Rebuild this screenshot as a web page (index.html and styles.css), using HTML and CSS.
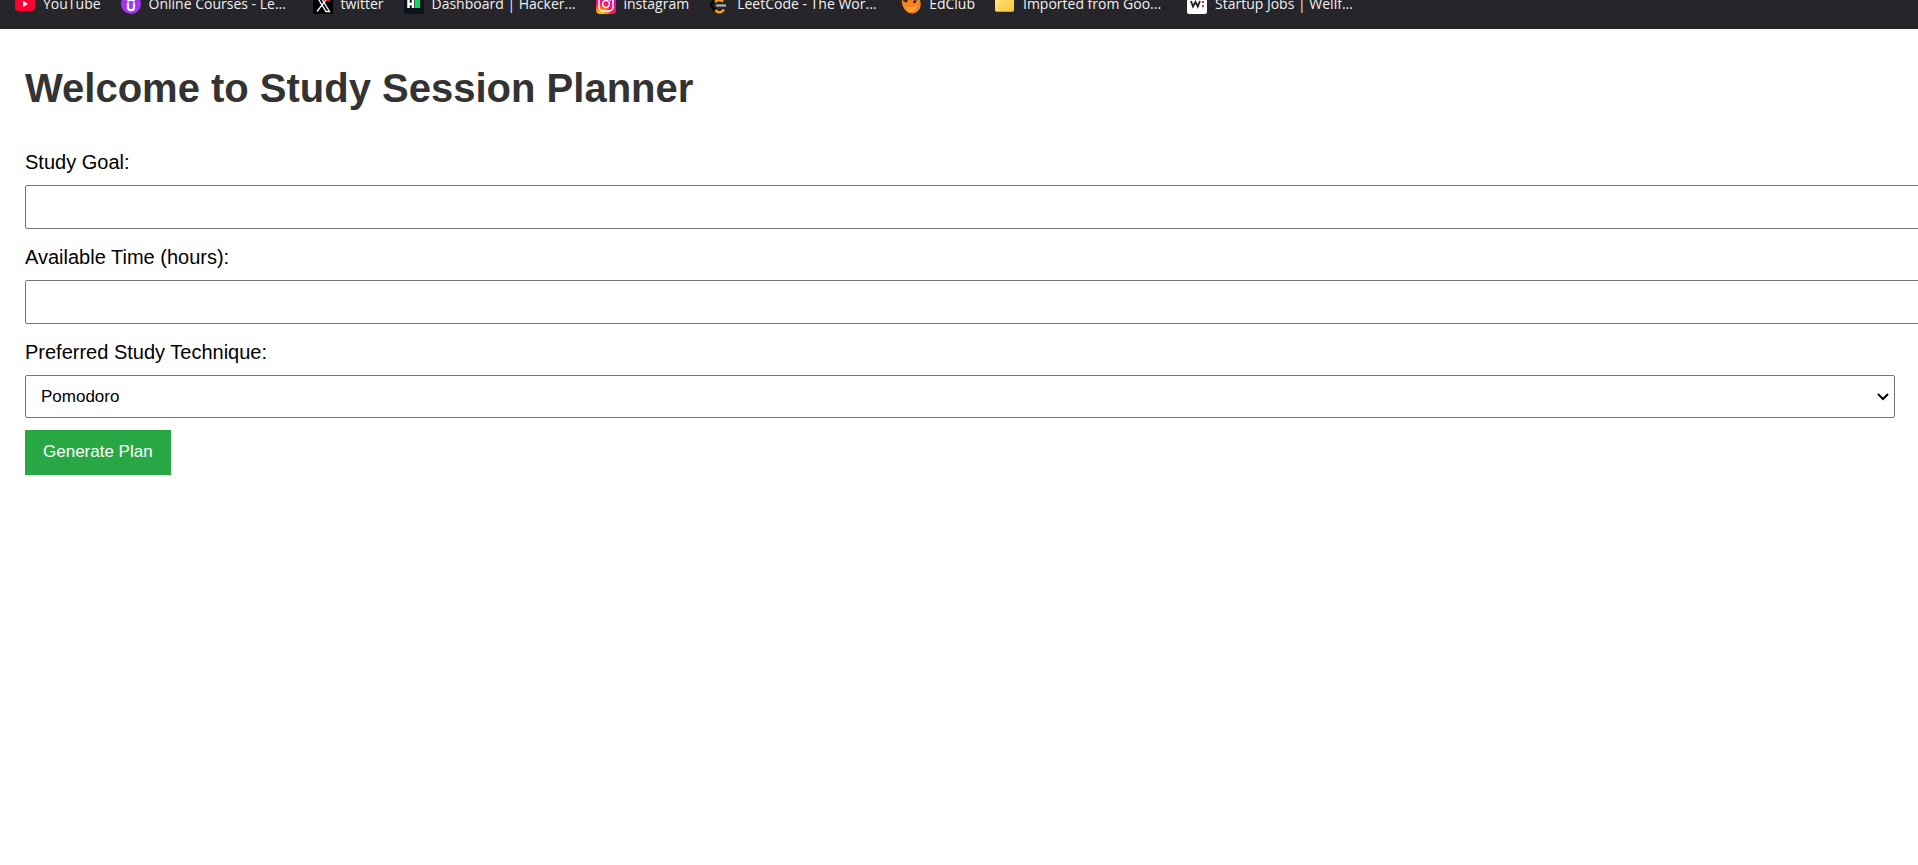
FILE: index.html
```
<!DOCTYPE html>
<html lang="en">
<head>
<meta charset="utf-8">
<title>Study Session Planner</title>
<link rel="stylesheet" href="styles.css">
</head>
<body>
<nav class="bookmarks" aria-label="Bookmarks">
  <a class="bookmark" href="#"><svg class="icon" viewBox="0 0 20 20"><rect y="3" width="20" height="14" rx="4" fill="#f03"/><path d="M8 7l5 3-5 3z" fill="#fff"/></svg>YouTube</a>
  <a class="bookmark long" href="#"><svg class="icon" viewBox="0 0 20 20"><circle cx="10" cy="10" r="10" fill="#a435f0"/><path d="M7 8.500v5q0 2.700 3 2.700t3-2.700v-5M6.500 7l3.500-2 3.500 2" fill="none" stroke="#fff" stroke-width="2.200"/></svg>Online Courses - Le...</a>
  <a class="bookmark" href="#"><svg class="icon" viewBox="0 0 20 20"><path d="M0 0h20v20H0z"/><path d="M3.500 2h3.500l9.500 15.500H13zM16 2L4 17.500" fill="none" stroke="#fff" stroke-width="1.300"/><circle cx="15" cy="5" r="2.500" fill="#e0242f"/></svg>twitter</a>
  <a class="bookmark long" href="#"><svg class="icon" viewBox="0 0 20 20"><path d="M0 0h20v20H0z" fill="#0e141e"/><path d="M4.500 5v9M9 5v9M4 10h5" stroke="#fff" stroke-width="2.500"/><path d="M11 5h5v9h-5z" fill="#05e165"/></svg>Dashboard | Hacker...</a>
  <a class="bookmark" href="#"><svg class="icon" viewBox="0 0 20 20"><defs><radialGradient id="insta" cx=".25" cy="1.050" r="1.100"><stop offset="0" stop-color="#ffe000"/><stop offset=".25" stop-color="#ff9a00"/><stop offset=".5" stop-color="#ff1657"/><stop offset="1" stop-color="#e600d8"/></radialGradient></defs><rect width="20" height="20" rx="4" fill="url(#insta)"/><rect x="3" y="3" width="14" height="14" rx="4" fill="none" stroke="#fff" stroke-width="1.500"/><circle cx="10" cy="10" r="3.400" fill="none" stroke="#fff" stroke-width="1.500"/><circle cx="14" cy="6" r="1" fill="#fff"/></svg>instagram</a>
  <a class="bookmark long" href="#"><svg class="icon" viewBox="0 0 20 20"><path d="M11 1L3 9q-2 2 0 4l4 4" fill="none" stroke="#090909" stroke-width="3"/><path d="M6 8l2-1.500q3-1.500 6 1M6.500 16q2 3 5 2.200 2-.5 3.500-2.700" fill="none" stroke="#ffa116" stroke-width="2.400"/><path d="M7 11.500h10" stroke="#b3b3b3" stroke-width="2.200"/></svg>LeetCode - The Wor...</a>
  <a class="bookmark" href="#"><svg class="icon" viewBox="0 0 20 20"><path d="M1 5q2 4 5 3 1-5 5-8l1 6 3 1 3-3q4 8-1 13-6 5-12 0-5-5-4-12z" fill="#f58220"/><path d="M4 12q5 3 12-1-1 7-6 7-4 0-6-6z" fill="#ff9c35"/><path d="M4 5l2 3M12 8h3" stroke="#47251b" stroke-width="2"/></svg>EdClub</a>
  <a class="bookmark long" href="#"><svg class="icon" viewBox="0 0 20 20"><defs><linearGradient id="folder" x2="1" y2="1"><stop stop-color="#ffe58b"/><stop offset="1" stop-color="#fcc62d"/></linearGradient></defs><path d="M0 2h8l2 2h9v12q0 2-2 2H2q-2 0-2-2z" fill="url(#folder)"/><path d="M1 17.500h17" stroke="#d99c1c"/></svg>Imported from Goo...</a>
  <a class="bookmark" href="#"><svg class="icon" viewBox="0 0 20 20"><rect width="20" height="20" rx="2" fill="#fff"/><path d="M4 7l2 5.500L8.500 8l2.300 4.500L13 7" fill="none" stroke="#222" stroke-width="1.800"/><path d="M15 7h2v2h-2zM15 11h2v2h-2z" fill="#ec2e3a"/></svg>Startup Jobs | Wellf...</a>
</nav>
<main class="planner">
  <h1 class="title">Welcome to Study Session Planner</h1>
  <form class="form">
    <label class="label" for="goal">Study Goal:</label>
    <input class="field" id="goal" type="text">
    <label class="label" for="time">Available Time (hours):</label>
    <input class="field" id="time" type="number">
    <label class="label" for="technique">Preferred Study Technique:</label>
    <div class="select-wrap">
      <select class="field select" id="technique"><option>Pomodoro</option></select>
      <svg class="chevron" viewBox="0 0 12 8"><path d="M1 1l5 5 5-5" fill="none" stroke="#000" stroke-width="2"/></svg>
    </div>
    <button class="submit" type="submit">Generate Plan</button>
  </form>
</main>
</body>
</html>
```
FILE: styles.css
```
* {
  box-sizing: border-box;
}

body {
  margin: 0;
  overflow-x: hidden;
  background: #fff;
  color: #000;
  font: 20px/24px "Liberation Sans", Arial, sans-serif;
}

.bookmarks {
  display: flex;
  align-items: flex-end;
  height: 29px;
  padding: 0 15px 15px;
  overflow: hidden;
  background: #26252a;
}

.bookmark {
  display: flex;
  flex: none;
  gap: 8px;
  margin-right: 20px;
  color: #f1f1f1;
  font: 14px/20px "Open Sans", "Noto Sans", sans-serif;
  text-decoration: none;
  white-space: nowrap;
}

.bookmark.long {
  width: 172px;
}

.icon {
  flex: none;
  width: 20px;
  height: 20px;
}

.planner {
  padding: 36px 25px;
}

.title {
  margin: 0 0 38px;
  color: #333;
  font-size: 40px;
  line-height: 46px;
}

.form {
  display: flex;
  flex-direction: column;
  align-items: flex-start;
}

.label {
  margin-bottom: 10px;
  line-height: 26px;
}

.field {
  flex: none;
  width: calc(100% + 28px);
  height: 44px;
  margin: 0 0 15px;
  padding: 0 15px;
  border: 1px solid #767676;
  border-radius: 2px;
  background: #fff;
  color: #000;
  font: 17px/20px "Liberation Sans", Arial, sans-serif;
}

.select-wrap {
  position: relative;
  width: calc(100% + 2px);
}

.select {
  display: block;
  width: 100%;
  height: 43px;
  margin-bottom: 12px;
  appearance: none;
}

.chevron {
  position: absolute;
  top: 18px;
  right: 6px;
  width: 12px;
  height: 8px;
  pointer-events: none;
}

.submit {
  height: 45px;
  padding: 0 18px 2px;
  border: 0;
  background: #28a745;
  color: #fff;
  font: 17px/20px "Liberation Sans", Arial, sans-serif;
}
```
